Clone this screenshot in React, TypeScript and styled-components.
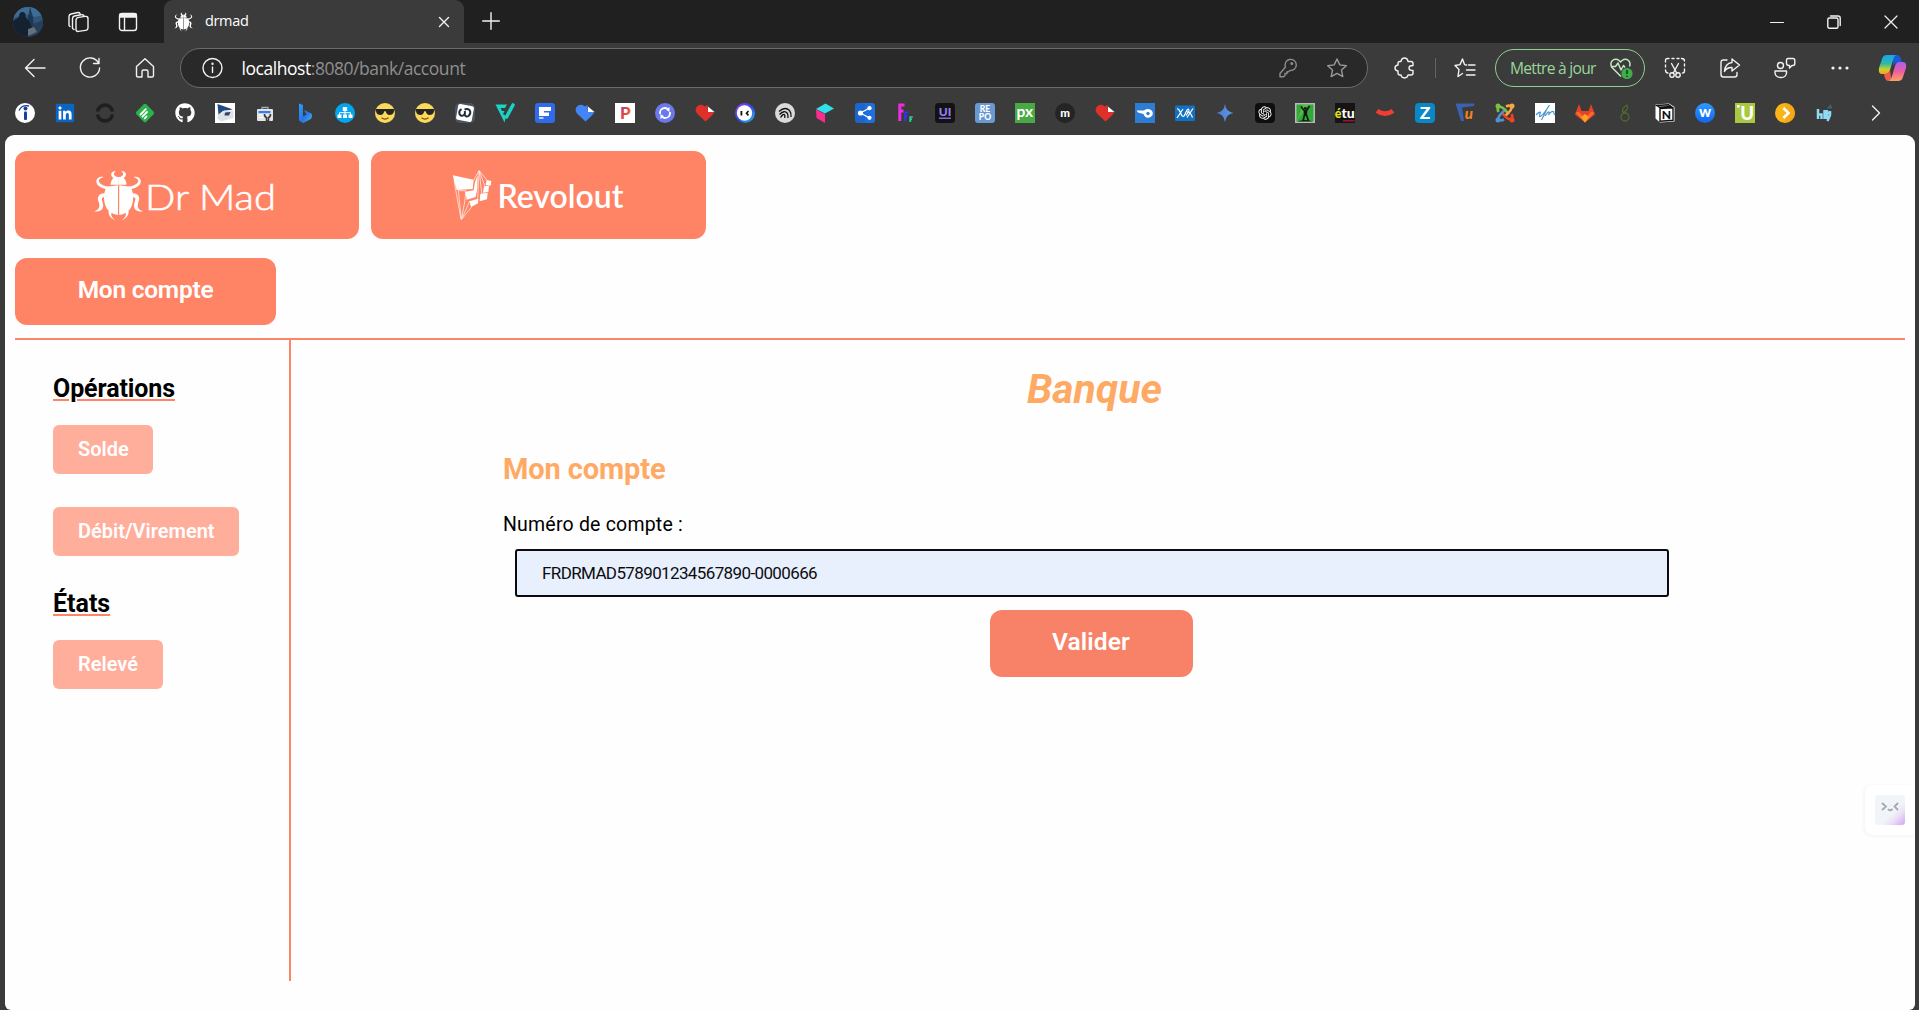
import React from "react";
import styled, { createGlobalStyle } from "styled-components";
import { FaGithub, FaLinkedin } from "react-icons/fa";
import { RiOpenaiFill } from "react-icons/ri";

const coral = "#ff8465";
const peach = "#ffaa64";

const GlobalStyle = createGlobalStyle`
  * { box-sizing: border-box; }
  html, body { margin: 0; height: 100%; overflow: hidden; background: #3b3b3b; }
  #root { height: 100%; }
  svg { display: block; flex: none; overflow: visible; }
`;

/* ---------- browser chrome ---------- */

const Window = styled.div`
  display: flex;
  flex-direction: column;
  width: 1919px;
  height: 1010px;
  background: #3b3b3b;
  font-family: "Open Sans", "Noto Sans", sans-serif;
  color: #fff;
`;

const TitleBar = styled.div`
  display: flex;
  align-items: center;
  height: 43px;
  flex: none;
  background: #202020;
`;

const Slot = styled.div<{ $w: number; $ml?: number }>`
  display: flex;
  flex: none;
  align-items: center;
  justify-content: center;
  width: ${(p) => p.$w}px;
  margin-left: ${(p) => p.$ml ?? 0}px;
`;

const Avatar = styled.div`
  width: 30px;
  height: 30px;
  border-radius: 50%;
  overflow: hidden;
`;

const Tab = styled.div`
  display: flex;
  align-items: center;
  align-self: stretch;
  width: 300px;
  margin-left: 10px;
  padding: 0 14px 0 10px;
  border-radius: 9px 9px 0 0;
  background: #3b3b3b;
`;

const TabTitle = styled.span`
  flex: 1;
  margin-left: 12px;
  padding-bottom: 2px;
  font-size: 14.5px;
  line-height: 20px;
  letter-spacing: -0.35px;
`;

const WindowButtons = styled.div`
  display: flex;
  margin-left: auto;
`;

const Toolbar = styled.div`
  display: flex;
  align-items: center;
  height: 50px;
  flex: none;
  padding-left: 8px;
`;

const AddressBar = styled.div`
  display: flex;
  align-items: center;
  width: 1188px;
  height: 40px;
  margin-left: 8px;
  padding: 0 19px 0 21px;
  border: 1px solid #6b6b6b;
  border-radius: 20px;
  background: #292929;
`;

const Address = styled.span`
  flex: 1;
  margin-left: 17.5px;
  padding-bottom: 1px;
  font-size: 17.5px;
  line-height: 24px;
  letter-spacing: -0.45px;
  color: #8f8f8f;
  b { font-weight: 400; color: #fff; }
`;

const Separator = styled.span`
  width: 1px;
  height: 20px;
  margin: 0 5px;
  background: #626262;
`;

const UpdateButton = styled.button`
  display: flex;
  align-items: center;
  justify-content: space-between;
  width: 150px;
  height: 38px;
  margin: 0 2px 0 6px;
  padding: 0 10px 0 14px;
  border: 1.5px solid #8fd08f;
  border-radius: 19px;
  background: transparent;
  color: #9ad69a;
  font: 400 15.6px/20px "Open Sans", sans-serif;
  letter-spacing: -0.72px;
  white-space: nowrap;
`;

const Bookmarks = styled.div`
  display: flex;
  align-items: center;
  height: 42px;
  flex: none;
  gap: 20px;
  padding: 0 0 2px 15px;
`;

const glyph = { fill: "none", stroke: "#f2f2f2", strokeWidth: 1.4, strokeLinecap: "round", strokeLinejoin: "round" } as const;

const Glyph = ({ w = 22, h = 22, color = "#f2f2f2", children }: { w?: number; h?: number; color?: string; children: React.ReactNode }) => (
  <svg width={w} height={h} viewBox={`0 0 ${w} ${h}`} {...glyph} stroke={color}>
    {children}
  </svg>
);

const starPath = "M11 2 L13.8 7.9 L20.3 8.7 L15.5 13.1 L16.8 19.6 L11 16.4 L5.2 19.6 L6.5 13.1 L1.7 8.7 L8.2 7.9 Z";

const BeetleHalf = () => (
  <>
    <path d="M357 164 L323 168 C310 190 313 226 330 241 C338 248 347 252 357 253 Z" />
    <path d="M359 162 L335 162 C335 152 338 146 345 141 L348 138 L359 139 Z" />
    <path d="M347 144 C333 138 332 122 351 121 C343 127 342 132 352 138 Z" />
    <path d="M332 176 C311 176 291 166 292 151 C293 141 303 136 314 139 C303 142 297 148 301 155 C305 163 320 168 336 169 Z" />
    <path d="M318 188 C303 187 293 198 298 211 C303 224 305 236 285 242 C300 245 316 238 312 220 C309 206 303 201 318 198 Z" />
    <path d="M331 236 C325 246 330 262 352 270 C340 261 334 255 338 246 Z" />
  </>
);

const Beetle = ({ width, height }: { width: number; height: number }) => (
  <svg width={width} height={height} viewBox="285 118 147 153" fill="#fff">
    <BeetleHalf />
    <g transform="translate(717.5 0) scale(-1 1)">
      <BeetleHalf />
    </g>
  </svg>
);

const Copilot = () => (
  <svg width="29" height="28" viewBox="0 0 29 28">
    <defs>
      <linearGradient id="cpA" x1="0" y1="0" x2="0" y2="1">
        <stop offset="0" stopColor="#18a4f0" />
        <stop offset="0.45" stopColor="#2fb9a5" />
        <stop offset="0.75" stopColor="#c9cf2e" />
        <stop offset="1" stopColor="#f6a623" />
      </linearGradient>
      <linearGradient id="cpB" x1="0" y1="0" x2="0" y2="1">
        <stop offset="0" stopColor="#a95ff2" />
        <stop offset="0.5" stopColor="#ee5ea0" />
        <stop offset="1" stopColor="#fba35c" />
      </linearGradient>
    </defs>
    <path d="M15 1 h4 q3 0 4 4 l1 4 h-5 q-3 0-4 3 z" fill="#1b59d8" />
    <path d="M9 1 h9 q-2 1-3 5 l-3 10 q-1 4-5 4 H4 q-4 0-3-6 l3-9 q1-4 5-4z" fill="url(#cpA)" />
    <path d="M6 20 q4 0 6-4 l1 7 q1 4-3 4 q-3 0-4-7z" fill="#ef5a4c" />
    <path d="M20 27 h-9 q2-1 3-5 l3-10 q1-4 5-4 h3 q4 0 3 6 l-3 9 q-1 4-5 4z" fill="url(#cpB)" />
  </svg>
);

/* ---------- bookmark icons, each drawn on a 20 x 20 grid ---------- */

const Icon = ({ children }: { children: React.ReactNode }) => (
  <svg width="20" height="20" viewBox="0 0 20 20">{children}</svg>
);

type LetterProps = { x?: number; y: number; size: number; fill: string; weight?: number; italic?: boolean; children: string };
const Letter = ({ x = 10, y, size, fill, weight = 700, italic, children }: LetterProps) => (
  <text x={x} y={y} fontSize={size} fill={fill} fontWeight={weight} fontStyle={italic ? "italic" : "normal"} textAnchor="middle" fontFamily="Lato, sans-serif">
    {children}
  </text>
);

const Sunglasses = () => (
  <Icon>
    <circle cx="10" cy="10" r="10" fill="#fcd95b" />
    <path d="M0.5 6 H19.5 L18.5 10 Q17.5 12 14.5 12 Q11.5 12 10.7 8.3 H9.3 Q8.5 12 5.5 12 Q2.5 12 1.5 10 Z" fill="#262626" />
    <path d="M6.5 14.8 Q10 17.5 13.5 14.8" stroke="#6d4c12" strokeWidth="1.2" fill="none" />
  </Icon>
);

const FoldedHeart = ({ color }: { color: string }) => (
  <Icon>
    <path d="M10.5 18.5 L2 10.5 Q-0.5 7 1.5 4 Q4 1 7.5 2 L10 3.5 L12.5 1.8 L13 9 L19.5 9 Q18 12 10.5 18.5 Z" fill={color} />
    <path d="M13 3.5 L19.5 9 H13 Z" fill="#fff" />
  </Icon>
);

const bookmarks: React.ReactNode[] = [
  <Icon><circle cx="10" cy="10" r="10" fill="#fff" /><circle cx="10.5" cy="5.5" r="2" fill="#1a3f9f" /><rect x="9" y="8.5" width="3" height="8.5" rx="1" fill="#1a3f9f" /><path d="M4 7.5 Q7 1.5 14 3" stroke="#1a3f9f" strokeWidth="1.3" fill="none" /></Icon>,
  <Icon><rect x="3" y="3" width="14" height="14" fill="#fff" /><FaLinkedin x="-0.5" y="-0.5" size={21} color="#0a66c2" /></Icon>,
  <Icon><path d="M2.5 8.5 A7.6 7.6 0 0 1 17.5 8.5 M2.5 11.500 A7.6 7.6 0 0 0 17.5 11.5" fill="none" stroke="#1f1f1f" strokeWidth="3.6" /></Icon>,
  <Icon><rect x="3" y="3" width="14" height="14" rx="1.8" transform="rotate(45 10 10)" fill="#2bb24c" /><path d="M5.5 11.5 L10.8 6.2 M7.5 13.5 L12 9 M9.8 15.3 L11.5 13.5" stroke="#fff" strokeWidth="1.8" strokeLinecap="round" /></Icon>,
  <FaGithub size={20} color="#fff" />,
  <Icon><rect width="20" height="20" fill="#fff" /><path d="M2.5 1 L18 6.5 L8 8 L3.5 12 Z" fill="#1f4a86" /><path d="M4 11 L9 7.5 L18.5 8 L18.5 15 L6 18.500 L2 15 Z" fill="#dfe3e8" /><path d="M10 9.500 L15.500 9 L14 12.5 L9.5 12.5 Z" fill="#33475f" /></Icon>,
  <Icon><path d="M7 6.5 V4.5 H13 V6.5" stroke="#aaa" strokeWidth="1.3" fill="none" /><rect x="2" y="6" width="16" height="12" rx="1" fill="#e4e4e4" /><rect x="3.5" y="8" width="12" height="2.2" fill="#2f7ff0" /><path d="M3.5 12 H8 M3.5 14.5 H8" stroke="#fff" strokeWidth="1.2" /><path d="M9.5 11 Q9.5 14 11.5 14.5 V18 H13.5 V14.5 Q15.5 14 15.5 11" stroke="#3b3b3b" strokeWidth="1.6" fill="none" /></Icon>,
  <Icon><defs><linearGradient id="bing" x1="0" y1="0" x2="1" y2="1"><stop offset="0" stopColor="#2aa2f5" /><stop offset="0.55" stopColor="#2a72e8" /><stop offset="1" stopColor="#38c0ea" /></linearGradient></defs><path d="M4 0.5 L8 2 V13.5 L11.5 11.5 L9 7 L16.5 10.5 Q18 14.5 15 16.5 L8 20 L4 17.5 Z" fill="url(#bing)" /></Icon>,
  <Icon><circle cx="10" cy="10" r="10" fill="#03a5ee" /><g fill="#fff"><rect x="7.8" y="4" width="4.4" height="4" /><rect x="2.5" y="11.5" width="4" height="3.5" /><rect x="8" y="11.5" width="4" height="3.5" /><rect x="13.5" y="11.5" width="4" height="3.5" /></g><path d="M10 8 V12 M4.5 12 V9.7 H15.5 V12" stroke="#fff" fill="none" /></Icon>,
  <Sunglasses />,
  <Sunglasses />,
  <Icon><rect width="20" height="20" rx="5" fill="#4a5462" /><rect x="2" y="2" width="16" height="16" rx="2" transform="rotate(10 10 10)" fill="#fff" /><path d="M6.5 6 Q3.5 8 4.5 11 Q6 14 9 12 Q10.5 10.500 9.8 8 M9.5 11.500 Q11 14.500 13.5 13 Q16.500 10 14.500 7 Q12.500 5.500 9.500 6.500" stroke="#222d38" strokeWidth="2" fill="none" /></Icon>,
  <Icon><path d="M0.5 1.5 H12 L10 5 H5.5 L7 8 H9.5 L8 11 L11 13 L9.5 19.5 Z" fill="#19d3c5" /><path d="M18 2 L11.5 14" stroke="#19d3c5" strokeWidth="3.6" strokeLinecap="round" /></Icon>,
  <Icon><rect width="20" height="20" rx="3" fill="#2f6bea" /><path d="M4 4 H16 V8 H9 V9.5 H14 V13 H4 Z" fill="#fff" /><path d="M4 14 H8.5 V16 H4Z" fill="#b9cffb" /></Icon>,
  <FoldedHeart color="#4285f4" />,
  <Icon><defs><linearGradient id="pp" x1="0" y1="0" x2="1" y2="1"><stop offset="0" stopColor="#7d3cb5" /><stop offset="0.5" stopColor="#e8453c" /><stop offset="1" stopColor="#f7931e" /></linearGradient></defs><rect width="20" height="20" fill="#fff" /><text x="10.300" y="16" fontFamily="Lato, sans-serif" fontWeight="900" fontSize="17" textAnchor="middle" fill="url(#pp)">P</text></Icon>,
  <Icon><circle cx="10" cy="10" r="10" fill="#6c78f0" /><path d="M5 11 Q4.5 5 10.5 5 L14 6.5 M15 9 Q15.5 15 9.5 15 L6 13.5" stroke="#fff" strokeWidth="1.8" fill="none" /><path d="M14.5 4 V9 L11 6.8 Z M5.5 16 V11 L9 13.2 Z" fill="#fff" /></Icon>,
  <FoldedHeart color="#e0302b" />,
  <Icon><defs><linearGradient id="ring" x1="0" y1="0" x2="1" y2="1"><stop offset="0" stopColor="#a63df2" /><stop offset="0.5" stopColor="#3346e8" /><stop offset="1" stopColor="#25c5ee" /></linearGradient></defs><circle cx="10" cy="10" r="10" fill="url(#ring)" /><circle cx="9.5" cy="10" r="7.7" fill="#fff" /><rect x="5.5" y="8" width="1.8" height="4.5" fill="#111" /><path d="M13.5 8 L11.5 10.2 L13.5 12.4" stroke="#111" strokeWidth="1.6" fill="none" /></Icon>,
  <Icon><circle cx="10" cy="10" r="10" fill="#d9d9d9" /><path d="M4 8.500 Q10 3 14.5 7.5 Q16.5 10 16 14 M4.500 11.500 Q9.500 6.500 12.500 10.5 Q13.200 12 13 15 M5.5 14.5 Q8.5 10 9.8 12 L9.8 15" stroke="#111" strokeWidth="1.3" fill="none" /></Icon>,
  <Icon><path d="M1 6 L10.5 0.5 L19 5.5 L10 10.5 Z" fill="#2fdfe9" /><path d="M1 6.5 L10 11 V20 L1.5 15 Z" fill="#fb2c8c" /></Icon>,
  <Icon><rect width="20" height="20" rx="3" fill="#1f6fdc" /><rect width="10" height="20" rx="3" fill="#1657bd" opacity="0.4" /><path d="M14.5 5 L5.5 10 L14.5 15" stroke="#fff" strokeWidth="1.3" fill="none" /><circle cx="5.5" cy="10" r="2.6" fill="#fff" /><circle cx="14.5" cy="5.2" r="2.1" fill="#fff" /><circle cx="14.5" cy="14.8" r="2.1" fill="#fff" /></Icon>,
  <Icon><path d="M4.8 18 V2 H9.5 M4.8 8 H8.500" stroke="#ee2ce0" strokeWidth="3" fill="none" /><path d="M10.2 18 V9.500 H13.5 M10.2 13.5 H12.5" stroke="#3434e6" strokeWidth="2.200" fill="none" /><path d="M15.2 19 V14 H17.8 M15.2 16.3 H17" stroke="#27d592" strokeWidth="1.7" fill="none" /></Icon>,
  <Icon><rect width="20" height="20" rx="3.5" fill="#121212" /><Letter y={12.5} size={12} fill="#9b7bf2" weight={900}>UI</Letter><rect x="4" y="14.5" width="12" height="1.5" fill="#7e6be8" /></Icon>,
  <Icon><rect width="20" height="20" rx="3" fill="#6a98d3" /><Letter y={9.3} size={8.6} fill="#fff" weight={900}>RE</Letter><Letter y={17.3} size={8.6} fill="#fff" weight={900}>PO</Letter></Icon>,
  <Icon><rect width="20" height="20" fill="#49a942" /><Letter x={9.8} y={14} size={15.5} fill="#fff" weight={700}>px</Letter></Icon>,
  <Icon><circle cx="10" cy="10" r="10" fill="#242424" /><Letter y={13.5} size={11.5} fill="#fff" weight={900}>m</Letter></Icon>,
  <FoldedHeart color="#e0302b" />,
  <Icon><rect width="20" height="20" fill="#2e7dd4" /><path d="M1.5 7.5 H9 Q12.5 5 16 7 Q18.5 9 17.5 12 Q15.5 15.5 11.5 14.5 Q9 13.5 8.5 11 L3 9.5 Z" fill="#fff" /><circle cx="13" cy="10.5" r="1.7" fill="#2e7dd4" /></Icon>,
  <Icon><rect y="2.5" width="20" height="15.5" rx="1" fill="#1172c4" /><path d="M2 5.500 Q4 6 5.500 9.500 Q7 14.500 9 13 L12 7 Q14 5 14 8 L11 12.500 M2 15 L8 6 M12 14.500 L18 5.500 M12 9 Q15 8 17.500 14.500" stroke="#fff" strokeWidth="1.200" fill="none" /></Icon>,
  <Icon><defs><linearGradient id="gem" x1="0" y1="0" x2="1" y2="0"><stop offset="0" stopColor="#3f83dd" /><stop offset="0.5" stopColor="#5b87d8" /><stop offset="1" stopColor="#4aa3e6" /></linearGradient></defs><path d="M10 1 Q11 9 18.5 10 Q11 11 10 19 Q9 11 1.5 10 Q9 9 10 1 Z" fill="url(#gem)" /></Icon>,
  <Icon><rect width="20" height="20" rx="4" fill="#0e0e0e" /><RiOpenaiFill x="2" y="2" size={16} color="#fff" /></Icon>,
  <Icon><rect width="20" height="20" fill="#b9b9b9" /><rect x="1.5" y="1.5" width="17" height="17" fill="#32a83b" /><path d="M1.5 18.5 L8 1.5 H14 Z" fill="#67c94c" opacity="0.6" /><path d="M6 3.500 L9 7.500 M14.500 3 L11.5 7.5 M8 18 L9.500 12 M13.500 18 L11.500 12" stroke="#101a10" strokeWidth="1.700" fill="none" /><path d="M8.500 7 H12.300 L12 13 H9 Z" fill="#101a10" /><circle cx="10.3" cy="5.4" r="1.4" fill="#101a10" /><path d="M2 18.500 Q10 15.500 18 18.500 Z" fill="#101a10" /></Icon>,
  <Icon><rect width="20" height="20" fill="#141414" /><Letter x={3} y={14.5} size={12.5} fill="#e9e018" weight={900}>é</Letter><Letter x={13} y={14.5} size={14} fill="#fff" weight={900}>tu</Letter><rect x="8" y="17" width="11.5" height="1.6" fill="#99162a" /></Icon>,
  <Icon><path d="M2 7.800 Q10 13.500 18 7.8" stroke="#f43d31" strokeWidth="4.6" fill="none" /></Icon>,
  <Icon><rect width="20" height="20" rx="4" fill="#0a87c6" /><Letter y={16.200} size={17.500} fill="#fff" weight={900}>Z</Letter></Icon>,
  <Icon><path d="M0.500 0.500 H19.500 L19 3 L7 4.500 L9 18 L6 18 Z" fill="#3a62ad" /><Letter x={13.8} y={15.5} size={15} fill="#f58220" weight={900} italic>u</Letter></Icon>,
  <Icon><g fill="none" strokeWidth="2.7"><path d="M3.5 9 Q1.5 5 4.5 4 Q7 3 12.5 9.5" stroke="#7ac143" /><path d="M11 3.5 Q15 1.5 16.5 4.5 Q17 7 10 13" stroke="#f9a541" /><path d="M16.5 11 Q18.5 15 15.5 16 Q13 17 7.5 10.5" stroke="#f44321" /><path d="M9 16.5 Q5 18.5 3.5 15.5 Q3 13 9.5 7.5" stroke="#5091cd" /></g><circle cx="3" cy="3" r="2.5" fill="#7ac143" /><circle cx="17" cy="3" r="2.5" fill="#f9a541" /><circle cx="17" cy="17" r="2.5" fill="#f44321" /><circle cx="3" cy="17" r="2.5" fill="#5091cd" /></Icon>,
  <Icon><rect width="20" height="20" fill="#fff" /><path d="M1 12 Q5 8 5.500 9.500 Q3.500 14 5.500 13.500 Q9 11 14.500 2 M12 6 L6.500 17 M10 13 Q13 8.500 14 9 Q14.500 10 13.500 12 Q16 8 18.500 8.500 L19.500 12" stroke="#4d97cf" strokeWidth="1.2" fill="none" /></Icon>,
  <Icon><path d="M4 1 L6.5 8 H13.5 L16 1 L20 11.5 L10 19.5 L0 11.5 Z" fill="#e2432a" /><path d="M0.5 9.5 L10 19.5 L19.5 9.5 L16 9 L10 15.5 L4 9 Z" fill="#fc6d26" /><path d="M6.2 14 L10 11 L13.8 14 L10 19.5 Z" fill="#fca326" /></Icon>,
  <Icon><circle cx="10" cy="14" r="4" fill="none" stroke="#526b2c" strokeWidth="1.3" /><path d="M9 10 Q6.5 8 8 5.5 Q10 3 12 2 Q13.5 5 11 7.5 L8.5 10" fill="none" stroke="#526b2c" strokeWidth="1.2" /></Icon>,
  <Icon><path d="M0.5 1.5 L14 0.5 L19.5 4 V18.5 L5 19.5 L0.5 15.5 Z" fill="#fff" /><path d="M5 5.5 L18 4.8 V17.3 L5 18.2 Z M1.8 2.5 L13.5 1.7 L16 3.5 L4.5 4.3 Z" fill="#fff" stroke="#111" strokeWidth="1.4" /><Letter x={11.5} y={15.6} size={12} fill="#111" weight={900}>N</Letter></Icon>,
  <Icon><defs><linearGradient id="ww" x1="0" y1="0" x2="0" y2="1"><stop offset="0" stopColor="#2c9cff" /><stop offset="1" stopColor="#1266f0" /></linearGradient></defs><circle cx="10" cy="10" r="10" fill="url(#ww)" /><Letter y={13.800} size={15} fill="#fff" weight={900}>w</Letter></Icon>,
  <Icon><rect width="20" height="20" fill="#a8c93f" /><rect x="2" y="2" width="2.6" height="2.6" fill="#fff" /><Letter x={12.2} y={16.500} size={18.5} fill="#fff" weight={900}>U</Letter></Icon>,
  <Icon><circle cx="10" cy="10" r="10" fill="#fbb516" /><path d="M10 0 A10 10 0 0 1 10 20 Z" fill="#f49c13" opacity="0.5" /><path d="M8.5 5 L13.5 10 L8.5 15" stroke="#fff" strokeWidth="2.6" fill="none" /></Icon>,
  <Icon><path d="M13.5 3.5 L15.5 1 L17.5 5.5 H11.5 Z" fill="#38637a" /><path d="M3 6 V16 M6.5 16 V11.5 H3 M9.5 7 V16 M12 7 V16 M9 10 H14 M15 8 V12 L12.500 18" stroke="#8edbf3" strokeWidth="2.500" fill="none" /></Icon>,
];

/* ---------- bank page ---------- */

const Page = styled.main`
  display: flex;
  flex-direction: column;
  flex: 1;
  margin: 0 4px 0 5px;
  padding: 16px 10px 0;
  border-radius: 9px 9px 6px 6px;
  background: #fefefe;
  font-family: Roboto, "Liberation Sans", sans-serif;
  color: #000;
`;

const Brands = styled.div`
  display: flex;
  gap: 12px;
`;

const BrandButton = styled.button<{ $w: number; $shift?: number }>`
  display: flex;
  align-items: center;
  justify-content: center;
  width: ${(p) => p.$w}px;
  height: 88px;
  padding: 0 ${(p) => p.$shift ?? 0}px 0 0;
  border: 0;
  border-radius: 12px;
  background: ${coral};
`;

const PrimaryButton = styled.button<{ $w: number; $bg?: string; $ls?: number }>`
  width: ${(p) => p.$w}px;
  height: 67px;
  padding: 0 0 4px;
  border: 0;
  border-radius: 12px;
  background: ${(p) => p.$bg ?? coral};
  color: #fff;
  font: 600 24.5px/30px Roboto, sans-serif;
  letter-spacing: ${(p) => p.$ls ?? 0}px;
`;

const AccountNav = styled.nav`
  margin-top: 19px;
  padding-bottom: 13px;
  border-bottom: 2px solid ${coral};
`;

const Content = styled.div`
  display: grid;
  grid-template-columns: 276px 1fr;
  height: 641px;
`;

const Sidebar = styled.aside`
  display: flex;
  flex-direction: column;
  align-items: flex-start;
  padding: 34px 0 0 38px;
  border-right: 2px solid ${coral};
`;

const Heading = styled.h3<{ $mt?: number; $ls: number }>`
  margin: ${(p) => p.$mt ?? 0}px 0 21px;
  font-size: 25px;
  line-height: 30px;
  font-weight: 700;
  letter-spacing: ${(p) => p.$ls}px;
  text-decoration: underline;
  text-decoration-color: ${coral};
  text-decoration-thickness: 2px;
  text-underline-offset: 2px;
`;

const SideButton = styled.button<{ $w: number; $ls: number; $mt?: number; $pb?: number }>`
  width: ${(p) => p.$w}px;
  height: 49px;
  margin-top: ${(p) => p.$mt ?? 0}px;
  padding: 0 0 ${(p) => p.$pb ?? 1}px 25px;
  border: 0;
  border-radius: 6px;
  background: #ffae9c;
  color: #fff;
  font: 600 20px/24px Roboto, sans-serif;
  letter-spacing: ${(p) => p.$ls}px;
  text-align: left;
  white-space: nowrap;
`;

const Main = styled.section`
  padding-top: 25px;
`;

const Title = styled.h1`
  margin: 0 7px 38px 0;
  text-align: center;
  font-size: 41px;
  line-height: 48px;
  font-style: italic;
  font-weight: 700;
  letter-spacing: 0;
  color: ${peach};
`;

const Form = styled.form`
  display: flex;
  flex-direction: column;
  width: 1178px;
  margin-left: 212px;
`;

const SubTitle = styled.h2`
  margin: 0 0 26px;
  font-size: 29px;
  line-height: 36px;
  font-weight: 700;
  letter-spacing: -0.1px;
  color: ${peach};
`;

const Label = styled.label`
  font-size: 19.5px;
  line-height: 24px;
  letter-spacing: 0.2px;
`;

const AccountInput = styled.input`
  height: 48px;
  margin: 12px 12px 13px;
  padding: 0 25px 1px;
  border: 2px solid #0c0c10;
  border-radius: 3px;
  outline: none;
  background: #e8f0fe;
  color: #0c0c10;
  font: 400 17px/20px Roboto, sans-serif;
  letter-spacing: -0.62px;
`;

const Submit = styled(PrimaryButton)`
  align-self: center;
  margin-right: 2px;
`;

const Assistant = styled.div`
  position: absolute;
  left: 1865px;
  top: 785px;
  display: flex;
  align-items: center;
  width: 50px;
  height: 50px;
  padding-left: 10px;
  border-radius: 8px 0 0 8px;
  background: #fff;
  box-shadow: -1px 1px 4px rgba(0, 0, 0, 0.05);
  clip-path: inset(-6px 0 -6px -6px);
`;

const AssistantFace = styled.div`
  width: 30px;
  height: 30px;
  border-radius: 3px;
  background: linear-gradient(135deg, #f1f5f9 0 58%, #ede0f6 74%, #cfa8ee);
`;

const RevoloutMark = () => (
  <svg width="40" height="50" viewBox="276 119 118 150" fill="#fff">
    <path d="M277 135 L340 148 L337 176 L289 179 Z" />
    <path d="M315 184 L340 180 L344 155 L352 135 L351 172 L346 200 L319 208 Z" />
    <path d="M327 213 L354 205 L353 219 L332 230 Z" />
    <path d="M360 190 L382 187 L380 207 L358 213 Z" />
    <path d="M371 168 L386 166 L384 185 L368 187 Z" />
    <path d="M379 149 L393 152 L391 166 L376 164 Z" />
    <path d="M356 121 L340 150 M356 121 L352 205 M357 121 L380 150 M357 122 L374 168 M357 124 L364 188 M281 150 L302 267 M294 181 L303 267 M294 181 L316 181 L314 210 L304 262 M304 267 L334 230 M304 267 L328 212" stroke="#fff" strokeWidth="2" fill="none" />
  </svg>
);

export default function App() {
  return (
    <Window>
      <GlobalStyle />
      <TitleBar>
        <Slot $w={50} $ml={3}>
          <Avatar>
            <svg width="30" height="30" viewBox="0 0 30 30">
              <rect width="30" height="30" fill="#2f5578" />
              <path d="M0 0 H30 V8 L22 10 L12 7 L0 11 Z" fill="#3d6d97" />
              <path d="M17 0 L15 10 L13 30 H21 L20 10 Z" fill="#1b3046" opacity="0.8" />
              <path d="M0 30 V14 L6 10 Q6 5 9.5 5 Q13 5 12.5 10 L16 14 L20 23 L14 30 Z" fill="#142131" />
              <path d="M20 17 L30 13 V30 H16 Z" fill="#25405a" />
              <path d="M15 22 L21 20 L24 25 L15 29 Z" fill="#66707c" />
            </svg>
          </Avatar>
        </Slot>
        <Slot $w={49}>
          <Glyph>
            <rect x="9" y="6" width="12" height="14" rx="2.5" transform="skewY(-8) translate(0 2)" />
            <path d="M5.5 17.5 V7.5 Q5.5 5.5 7.5 5 L14 3.7 M2 14.5 V5.5 Q2 3.5 4 3 L11 1.5 Q12.5 1.3 13 2.5 M17 5 Q16.7 3.5 15 3.7 M2 14.5 L3 15.5 M5.5 17.5 L7 18.5" />
          </Glyph>
        </Slot>
        <Slot $w={52}>
          <Glyph w={20} h={20}>
            <rect x="1.5" y="1.5" width="17" height="17" rx="2.5" />
            <path d="M2 2 H18 V5 H2 Z" fill="#f2f2f2" />
            <path d="M6.5 6 V18" />
          </Glyph>
        </Slot>
        <Tab>
          <Beetle width={19} height={20} />
          <TabTitle>drmad</TabTitle>
          <Glyph w={12} h={12}><path d="M1.5 1.5 L10.5 10.5 M10.5 1.5 L1.5 10.5" /></Glyph>
        </Tab>
        <Slot $w={53}>
          <Glyph w={18} h={20}><path d="M9 0.7 V17.3 M0.7 9 H17.3" /></Glyph>
        </Slot>
        <WindowButtons>
          <Slot $w={57}><Glyph w={14} h={14}><path d="M0.5 7.5 H13.5" strokeWidth="1.2" /></Glyph></Slot>
          <Slot $w={57}><Glyph w={14} h={14}><rect x="0.8" y="3" width="10.2" height="10.2" rx="1.5" /><path d="M3.5 1 H11 Q13.2 1 13.2 3 V10.5" /></Glyph></Slot>
          <Slot $w={57}><Glyph w={14} h={14}><path d="M1 1 L13 13 M13 1 L1 13" strokeWidth="1.2" /></Glyph></Slot>
        </WindowButtons>
      </TitleBar>

      <Toolbar>
        <Slot $w={54}><Glyph><path d="M21 11 H1.5 M10 2.5 L1.5 11 L10 19.5" /></Glyph></Slot>
        <Slot $w={55}><Glyph><path d="M19.5 6 A9.6 9.6 0 1 0 20.6 11 M20 1.5 V6.5 H14.5" /></Glyph></Slot>
        <Slot $w={55}><Glyph><path d="M2.5 9.5 L11 1.8 L19.5 9.5 V18.5 Q19.5 20 18 20 H14 V14.5 Q14 13 12.5 13 H9.5 Q8 13 8 14.5 V20 H4 Q2.5 20 2.5 18.5 Z" /></Glyph></Slot>
        <AddressBar>
          <Glyph><circle cx="10.5" cy="11" r="9.5" /><path d="M10.5 10 V15.5" /><circle cx="10.5" cy="6.8" r="0.5" fill="#f2f2f2" /></Glyph>
          <Address><b>localhost</b>:8080/bank/account</Address>
          <Slot $w={20}>
            <Glyph w={18} color="#8d8d8d"><path d="M6.5 10 A5.6 5.6 0 1 1 11 13.5 L9 15 L8 14.8 V16.5 H6 V18.5 L4.5 19.8 H1 V16.5 Z" /><circle cx="12.8" cy="6.5" r="0.8" fill="#8d8d8d" /></Glyph>
          </Slot>
          <Slot $w={22} $ml={28}><Glyph color="#9a9a9a"><path d={starPath} /></Glyph></Slot>
        </AddressBar>
        <Slot $w={50} $ml={12}>
          <Glyph><path d="M7 4.5 Q7.500 1 10.5 1 Q13.500 1 14 4.5 H17 Q19 4.5 19 6.5 V8.5 Q15 8.5 15 11 Q15 13.5 19 13.5 V16 Q19 18 17 18 H14 Q13.500 21 10.5 21 Q7.5 21 7 18 H6 Q4 18 4 16 V14 Q1 13.500 1 11 Q1 8.500 4 8 V6.5 Q4 4.5 6 4.5 Z" /></Glyph>
        </Slot>
        <Separator />
        <Slot $w={48}>
          <Glyph><path d="M12.5 8 L10.5 7.6 L8.5 2 L6 7.6 L1 8.5 L5 12.5 L4 19.5 L8.5 16.5 M14.5 8 H21 M12.5 13 H21 M12.5 18 H21" /></Glyph>
        </Slot>
        <UpdateButton>
          Mettre à jour
          <svg width="25" height="24" viewBox="0 0 25 24" fill="none" stroke="#c4e6c4" strokeWidth="1.5" strokeLinejoin="round">
            <path d="M12 20.5 L3 11.5 Q0.5 7.5 3.5 4.5 Q7 2 10 4.5 L11.5 6 L13 4.5 Q16.5 2 19.5 4.5 Q22 7 20.5 10.5 M2 10.5 H6.5 L9 7 L12 14 L14.5 9.5 L16 11.5" />
            <circle cx="18" cy="17.5" r="5.6" fill="#3fae49" stroke="none" />
            <path d="M18 14 V18 M18 19.7 V21.1" stroke="#16361a" />
          </svg>
        </UpdateButton>
        <Slot $w={55}>
          <Glyph><path d="M1.5 5 V3.5 Q1.5 1.5 3.5 1.5 H5 M8 1.5 H10 M13 1.5 H15 M17.5 1.5 Q20.5 1.5 20.5 4 M20.5 7 V9 M20.5 12 V14 Q20.5 16 18.5 16 M1.5 8 V10 M1.5 13 Q1.5 16 4 16 M7.5 6.5 L12.7 16 M14.5 6.5 L9.3 16" /><circle cx="8" cy="18" r="2.2" /><circle cx="14" cy="18" r="2.2" /></Glyph>
        </Slot>
        <Slot $w={55}>
          <Glyph><path d="M8 3 H4.5 Q2 3 2 5.5 V17.5 Q2 20 4.5 20 H15.5 Q18 20 18 17.5 V15.5 M13 2 L20.5 8 L13 14 V10.5 Q8 10 5.5 14.5 Q6 6.5 13 5.5 Z" /></Glyph>
        </Slot>
        <Slot $w={55}>
          <Glyph><circle cx="6.5" cy="8.5" r="3" /><path d="M1 14 H12.5 V16 Q12 20.5 7 20.5 Q1.5 20.5 1 16 Z M14 1.5 H19 Q20.8 1.5 20.8 3.5 V6.5 Q20.8 8.5 19 8.5 H18 L15.5 11 V8.5 Q12.5 8.5 12.5 6.5 V3.5 Q12.5 1.5 14 1.5 Z" /></Glyph>
        </Slot>
        <Slot $w={55}>
          <svg width="20" height="6" viewBox="0 0 20 6" fill="#f2f2f2"><circle cx="3" cy="3" r="1.6" /><circle cx="10" cy="3" r="1.6" /><circle cx="17" cy="3" r="1.6" /></svg>
        </Slot>
        <Slot $w={50}><Copilot /></Slot>
      </Toolbar>

      <Bookmarks>
        {bookmarks.map((b, i) => <React.Fragment key={i}>{b}</React.Fragment>)}
        <Slot $w={10} $ml={16}><Glyph w={10} h={18}><path d="M1.5 2 L8.5 9 L1.5 16" /></Glyph></Slot>
      </Bookmarks>

      <Page>
        <Brands>
          <BrandButton $w={344} $shift={5}>
            <Beetle width={49} height={51} />
            <svg width="132" height="51" viewBox="0 0 132 51">
              <text x="2" y="39.5" fontFamily="Lato, sans-serif" fontWeight="300" fontSize="36" fill="#fff" stroke="#fff" strokeWidth="0.6" textLength="131" lengthAdjust="spacingAndGlyphs">Dr Mad</text>
            </svg>
          </BrandButton>
          <BrandButton $w={335}>
            <RevoloutMark />
            <svg width="134" height="50" viewBox="0 0 134 50">
              <text x="5.5" y="37.5" fontFamily="Lato, sans-serif" fontWeight="600" fontSize="32.5" fill="#fff" textLength="126" lengthAdjust="spacingAndGlyphs">Revolout</text>
            </svg>
          </BrandButton>
        </Brands>
        <AccountNav>
          <PrimaryButton $w={261} $ls={-0.25}>Mon compte</PrimaryButton>
        </AccountNav>
        <Content>
          <Sidebar>
            <Heading $ls={-0.1}>Opérations</Heading>
            <SideButton $w={100} $ls={0} $pb={2}>Solde</SideButton>
            <SideButton $w={186} $ls={0} $mt={33}>Débit/Virement</SideButton>
            <Heading $mt={33} $ls={0}>États</Heading>
            <SideButton $w={110} $ls={0}>Relevé</SideButton>
          </Sidebar>
          <Main>
            <Title>Banque</Title>
            <Form>
              <SubTitle>Mon compte</SubTitle>
              <Label htmlFor="account">Numéro de compte :</Label>
              <AccountInput id="account" defaultValue="FRDRMAD578901234567890-0000666" />
              <Submit type="button" $w={203} $bg="#f88267" $ls={0.15}>Valider</Submit>
            </Form>
          </Main>
        </Content>
      </Page>
      <Assistant>
        <AssistantFace>
          <svg width="30" height="30" viewBox="0 0 30 30" fill="none" stroke="#a3a8b2" strokeWidth="1.8">
            <path d="M7 8 L11 11.5 L7 15 M23 8 L19.5 11.5 L23 15 M13 14 Q15 16.5 17.5 14" />
          </svg>
        </AssistantFace>
      </Assistant>
    </Window>
  );
}
